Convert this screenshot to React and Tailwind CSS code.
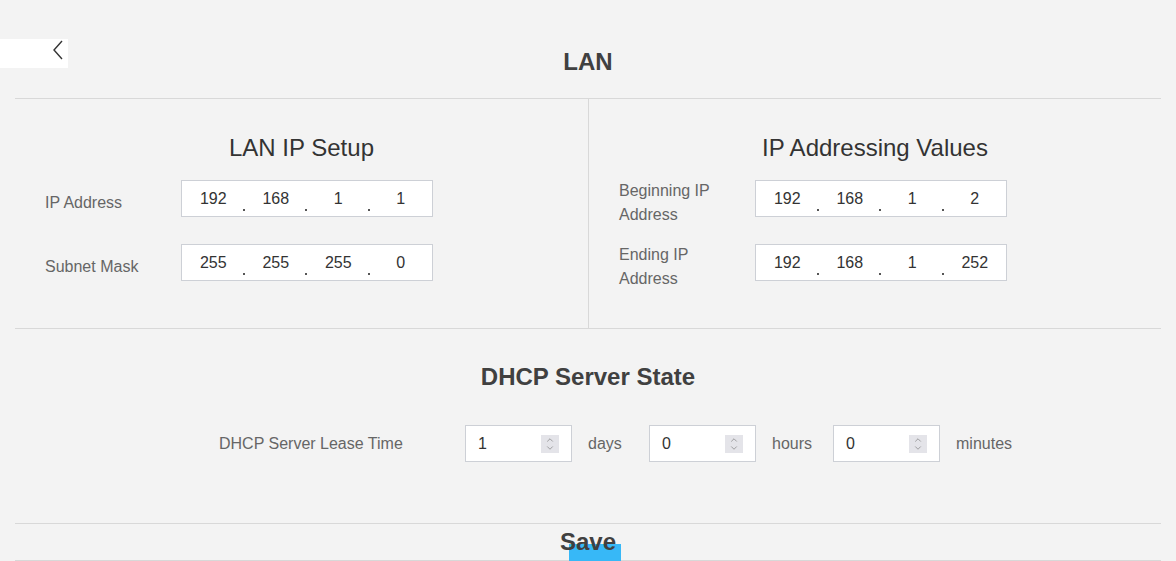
import { ChevronUp, ChevronDown } from 'lucide-react';

const font = { fontFamily: '"Liberation Sans", Arial, sans-serif' };

function IpField({ parts }) {
  return (
    <div className="flex h-[37px] w-[252px] border border-[#cdd0d6] bg-white">
      {parts.map((p, i) => (
        <div key={i} className="relative flex flex-1 items-center justify-center text-[16px] text-[#333]">
          {p}
          {i < 3 && (
            <span className="absolute right-0 bottom-[5px] h-[2px] w-[2px] bg-[#555]" />
          )}
        </div>
      ))}
    </div>
  );
}

function NumberField({ value }) {
  return (
    <div className="flex h-[37px] w-[107px] items-center justify-between border border-[#cdd0d6] bg-white pl-[12px] pr-[12px]">
      <span className="text-[16px] text-[#333]">{value}</span>
      <span className="flex h-[18px] w-[18px] flex-col items-center justify-center bg-[#e4e4e9] text-[#7a7a7a]">
        <ChevronUp size={10} strokeWidth={1.6} className="-mb-[1px]" />
        <ChevronDown size={10} strokeWidth={1.6} className="-mt-[1px]" />
      </span>
    </div>
  );
}

function Row({ label, parts, offset }) {
  return (
    <div className="flex h-[37px] items-start">
      <span className={`${offset} w-[166px] pl-[30px] pr-[30px] text-[16px] leading-[24px] text-[#666]`}>{label}</span>
      <IpField parts={parts} />
    </div>
  );
}

export default function App() {
  return (
    <div style={font} className="h-[561px] w-[1176px] overflow-hidden bg-[#f3f3f3]">
      <div className="relative h-[98px] pt-[48px]">
        <button className="absolute left-0 top-[39px] flex h-[29px] w-[68px] items-start justify-end bg-white pr-[4px]">
          <svg width="12" height="20" viewBox="0 0 12 20" className="mt-[1px]">
            <polyline points="10,1 2,10 10,19" fill="none" stroke="#333" strokeWidth="1.4" />
          </svg>
        </button>
        <h1 className="text-center text-[24px] font-bold leading-[28px] text-[#404040]">LAN</h1>
      </div>

      <div className="mx-[15px] border-t border-[#d8d8d8]">
        <div className="grid h-[229px] grid-cols-[574px_572px]">
          <div className="border-r border-[#d8d8d8] pt-[35px]">
            <h2 className="text-center text-[24px] leading-[28px] text-[#333]">LAN IP Setup</h2>
            <div className="mt-[18px] flex flex-col gap-[27px]">
              <Row label="IP Address" parts={['192', '168', '1', '1']} offset="mt-[11px]" />
              <Row label="Subnet Mask" parts={['255', '255', '255', '0']} offset="mt-[11px]" />
            </div>
          </div>
          <div className="pt-[35px]">
            <h2 className="text-center text-[24px] leading-[28px] text-[#333]">IP Addressing Values</h2>
            <div className="mt-[18px] flex flex-col gap-[27px]">
              <Row label="Beginning IP Address" parts={['192', '168', '1', '2']} offset="-mt-[1px]" />
              <Row label="Ending IP Address" parts={['192', '168', '1', '252']} offset="-mt-[1px]" />
            </div>
          </div>
        </div>

        <div className="h-[195px] border-t border-[#d8d8d8] pt-[34px]">
          <h2 className="text-center text-[24px] font-bold leading-[28px] text-[#404040]">DHCP Server State</h2>
          <div className="ml-[204px] mt-[34px] flex items-center text-[16px] text-[#666]">
            <span className="w-[246px]">DHCP Server Lease Time</span>
            <NumberField value="1" />
            <span className="mx-[16px] w-[45px]">days</span>
            <NumberField value="0" />
            <span className="mx-[16px] w-[45px]">hours</span>
            <NumberField value="0" />
            <span className="ml-[16px]">minutes</span>
          </div>
        </div>

        <div className="h-[38px] border-y border-[#d8d8d8]">
          <div className="relative mx-auto mt-[4px] w-[100px] text-center">
            <span className="absolute left-[31px] top-[16px] h-[17px] w-[52px] bg-[#37b8f7]" />
            <span className="relative text-[24px] font-bold leading-[28px] text-[#404040]">Save</span>
          </div>
        </div>
      </div>
    </div>
  );
}
